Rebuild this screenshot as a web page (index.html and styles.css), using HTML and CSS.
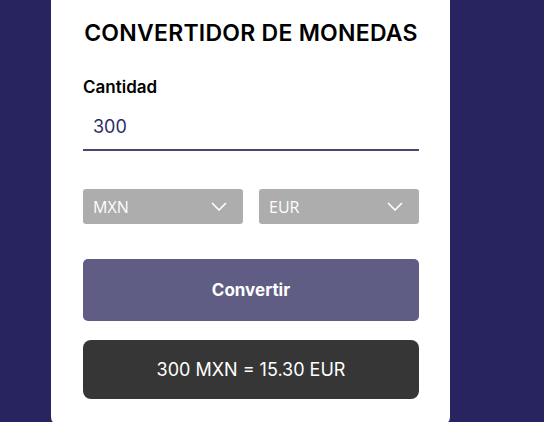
FILE: index.html
```html
<!DOCTYPE html>
<html lang="es">
<head>
<meta charset="utf-8">
<title>Convertidor de monedas</title>
<link rel="stylesheet" href="styles.css">
</head>
<body>
<main class="page">
  <section class="card">
    <h1 class="title">CONVERTIDOR DE MONEDAS</h1>
    <label class="label" for="amount">Cantidad</label>
    <div class="amount">300</div>
    <div class="selects">
      <div class="select">
        <span>MXN</span>
        <svg class="chev" width="16" height="9" viewBox="0 0 16 9"><polyline points="1,1 8,8 15,1" fill="none" stroke="#fff" stroke-width="1.6"/></svg>
      </div>
      <div class="select">
        <span>EUR</span>
        <svg class="chev" width="16" height="9" viewBox="0 0 16 9"><polyline points="1,1 8,8 15,1" fill="none" stroke="#fff" stroke-width="1.6"/></svg>
      </div>
    </div>
    <button class="btn">Convertir</button>
    <div class="result">300 MXN = 15.30 EUR</div>
  </section>
</main>
</body>
</html>
```
FILE: styles.css
```css
html, body {
  margin: 0;
  height: 422px;
  overflow: hidden;
}
body {
  background: #27245f;
  font-family: "Inter", "Open Sans", sans-serif;
}
.page {
  padding-left: 51px;
}
.card {
  width: 399px;
  box-sizing: border-box;
  background: #fff;
  border-radius: 0 0 8px 8px;
  padding: 14px 31px 26px 32px;
  display: flex;
  flex-direction: column;
}
.title {
  margin: 0;
  font-size: 23px;
  font-weight: 600;
  line-height: 38px;
  text-align: center;
  color: #000;
  letter-spacing: 0.25px;
}
.label {
  margin-top: 25px;
  font-size: 17px;
  font-weight: 600;
  line-height: 20px;
  color: #000;
}
.amount {
  margin-top: 18px;
  padding: 0 10px 10px;
  font-size: 18px;
  line-height: 24px;
  color: #2e2c68;
  border-bottom: 2px solid #4a4673;
}
.selects {
  margin-top: 38px;
  display: flex;
  gap: 16px;
}
.select {
  flex: 1;
  height: 35px;
  background: #adadad;
  border-radius: 3px;
  display: flex;
  align-items: center;
  justify-content: space-between;
  padding: 0 16px 0 10px;
  color: #fff;
  font-family: "Open Sans", sans-serif;
  font-size: 16px;
  font-weight: 500;
}
.chev {
  display: block;
}
.btn {
  margin-top: 35px;
  height: 62px;
  border: none;
  border-radius: 5px;
  background: #5f5d83;
  color: #fff;
  font-family: "Inter", sans-serif;
  font-size: 17px;
  font-weight: 700;
}
.result {
  margin-top: 19px;
  height: 59px;
  border-radius: 8px;
  background: #363636;
  color: #fff;
  font-size: 18px;
  display: flex;
  align-items: center;
  justify-content: center;
}
```
